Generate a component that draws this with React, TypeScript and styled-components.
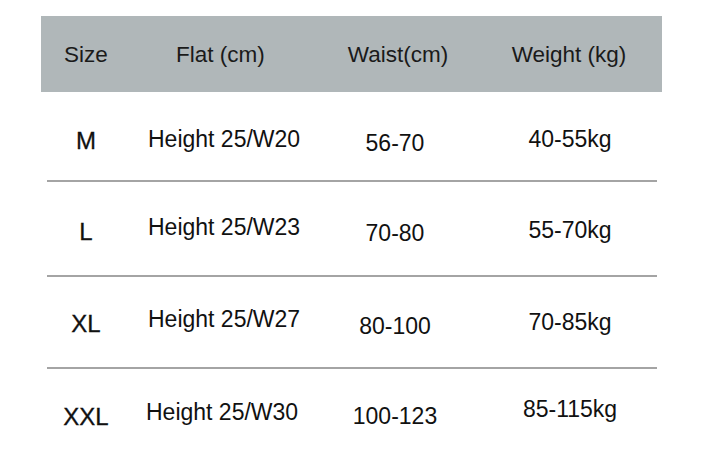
import React from "react";
import styled, { createGlobalStyle } from "styled-components";

const GlobalStyle = createGlobalStyle`
  html, body {
    margin: 0;
    padding: 0;
    background: #ffffff;
  }
  body {
    font-family: "Liberation Sans", Arial, sans-serif;
  }
`;

const Page = styled.div`
  width: 706px;
  height: 453px;
  overflow: hidden;
  background: #ffffff;
  padding-top: 16px;
  box-sizing: border-box;
`;

const Grid = styled.div<{ $height: number }>`
  margin-left: 41px;
  width: 621px;
  height: ${(p) => p.$height}px;
  display: grid;
  grid-template-columns: 90px 187px 160px 184px;
  align-items: center;
`;

const HeaderRow = styled(Grid)`
  background: #b0b7b9;
  color: #1a1a1a;
  font-size: 22.5px;
  line-height: 1;
`;

const Cell = styled.div<{ $pad?: number; $dy?: number; $dx?: number }>`
  text-align: ${(p) => (p.$pad !== undefined ? "left" : "center")};
  padding-left: ${(p) => p.$pad || 0}px;
  transform: translate(${(p) => p.$dx || 0}px, ${(p) => p.$dy || 0}px);
  white-space: nowrap;
`;

const BodyRow = styled(Grid)`
  color: #111111;
  font-size: 23px;
  line-height: 1;
`;

const SizeLabel = styled(Cell)`
  font-size: 24px;
  -webkit-text-stroke: 0.3px #111111;
`;

const Divider = styled.div`
  margin-left: 47px;
  width: 610px;
  height: 2px;
  background: #a4a4a4;
`;

type Row = {
  size: string;
  flat: string;
  waist: string;
  weight: string;
  height: number;
  dy: [number, number, number, number];
  flatDx?: number;
};

const rows: Row[] = [
  { size: "M", flat: "Height 25/W20", waist: "56-70", weight: "40-55kg", height: 88, dy: [5, 3, 7, 3] },
  { size: "L", flat: "Height 25/W23", waist: "70-80", weight: "55-70kg", height: 93, dy: [3, -1, 5, 2] },
  { size: "XL", flat: "Height 25/W27", waist: "80-100", weight: "70-85kg", height: 90, dy: [2, -3, 4, 0] },
  { size: "XXL", flat: "Height 25/W30", waist: "100-123", weight: "85-115kg", height: 84, dy: [6, 1, 5, -2], flatDx: -2 },
];

export default function App() {
  return (
    <Page>
      <GlobalStyle />
      <HeaderRow $height={76}>
        <Cell $dy={1}>Size</Cell>
        <Cell $pad={45} $dy={1}>Flat (cm)</Cell>
        <Cell $dy={1}>Waist(cm)</Cell>
        <Cell $dx={-1} $dy={1}>Weight (kg)</Cell>
      </HeaderRow>
      {rows.map((r, i) => (
        <React.Fragment key={r.size}>
          {i > 0 && <Divider />}
          <BodyRow $height={r.height}>
            <SizeLabel $dy={r.dy[0]}>{r.size}</SizeLabel>
            <Cell $pad={17} $dy={r.dy[1]} $dx={r.flatDx}>
              {r.flat}
            </Cell>
            <Cell $dy={r.dy[2]} $dx={-3}>
              {r.waist}
            </Cell>
            <Cell $dy={r.dy[3]}>{r.weight}</Cell>
          </BodyRow>
        </React.Fragment>
      ))}
    </Page>
  );
}
